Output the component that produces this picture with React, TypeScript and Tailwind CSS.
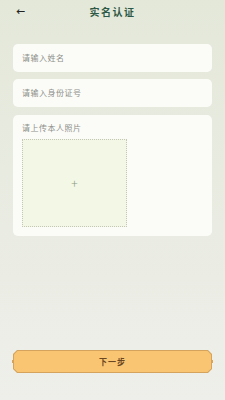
const FONT = { fontFamily: '"Noto Sans CJK SC", "Noto Sans", sans-serif' };

function Field({ placeholder }: { placeholder: string }) {
  return (
    <div className="flex h-[28px] items-center rounded-[5px] bg-[#fbfcf8] px-[9px]">
      <span className="text-[8px] tracking-[0.5px] text-[#8d8f88]">{placeholder}</span>
    </div>
  );
}

export default function App() {
  return (
    <div
      className="flex h-[400px] w-[225px] flex-col bg-gradient-to-b from-[#e4e8d9] to-[#eeefea]"
      style={FONT}
    >
      <div className="relative flex h-[22px] items-center justify-center">
        <span className="absolute left-[16px] top-[7px] text-[9px] font-bold leading-none text-[#222]">←</span>
        <span className="text-[10px] font-bold tracking-[1.5px] text-[#2e5846]">实名认证</span>
      </div>

      <div className="mt-[22px] flex flex-col gap-[7px] px-[13px]">
        <Field placeholder="请输入姓名" />
        <Field placeholder="请输入身份证号" />
        <div className="mt-[1px] rounded-[5px] bg-[#fbfcf8] px-[9px] pb-[9px] pt-[7px]">
          <div className="text-[8px] tracking-[0.5px] text-[#8d8f88]">请上传本人照片</div>
          <div className="mt-[5px] flex h-[88px] w-[105px] items-center justify-center border border-dotted border-[#c3c7b4] bg-[#f2f7e6]">
            <span className="text-[12px] font-light leading-none text-[#8b9a80]">+</span>
          </div>
        </div>
      </div>

      <div className="mt-auto mb-[27px] px-[13px]">
        <div className="relative">
          <div className="bg-[#d5a35c] p-[1px] [clip-path:polygon(4px_0,calc(100%-4px)_0,100%_4px,100%_calc(100%-4px),calc(100%-4px)_100%,4px_100%,0_calc(100%-4px),0_4px)]">
            <div className="flex h-[21px] items-center justify-center bg-[#f9c573] [clip-path:polygon(3.5px_0,calc(100%-3.5px)_0,100%_3.5px,100%_calc(100%-3.5px),calc(100%-3.5px)_100%,3.5px_100%,0_calc(100%-3.5px),0_3.5px)]">
              <span className="text-[8px] font-bold tracking-[1px] text-[#6a4720]">下一步</span>
            </div>
          </div>
          <span className="absolute left-[-1px] top-[10px] h-[3px] w-[2px] bg-[#d5a35c]" />
          <span className="absolute right-[-1px] top-[10px] h-[3px] w-[2px] bg-[#d5a35c]" />
        </div>
      </div>
    </div>
  );
}
